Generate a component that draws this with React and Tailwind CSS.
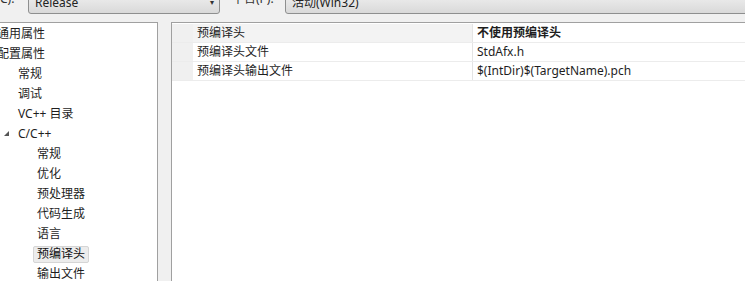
import React from "react";

const treeItems = [
  { label: "通用属性", level: 0 },
  { label: "配置属性", level: 0 },
  { label: "常规", level: 1 },
  { label: "调试", level: 1 },
  { label: "VC++ 目录", level: 1 },
  { label: "C/C++", level: 1, expanded: true },
  { label: "常规", level: 2 },
  { label: "优化", level: 2 },
  { label: "预处理器", level: 2 },
  { label: "代码生成", level: 2 },
  { label: "语言", level: 2 },
  { label: "预编译头", level: 2, selected: true },
  { label: "输出文件", level: 2 },
];

const props = [
  { name: "预编译头", value: "不使用预编译头", bold: true, selected: true },
  { name: "预编译头文件", value: "StdAfx.h" },
  { name: "预编译头输出文件", value: "$(IntDir)$(TargetName).pch" },
];

function Combo({ text, className }) {
  return (
    <div
      className={`h-[23px] -mt-[9px] flex items-center border border-[#8e8f8f] rounded-[3px] bg-gradient-to-b from-[#f2f2f2] to-[#d9d9d9] ${className}`}
    >
      <span className="pl-[6px] flex-1 text-[12px] text-[#222]">{text}</span>
    </div>
  );
}

function TreeRow({ item }) {
  const pad = item.level === 0 ? "pl-0" : item.level === 1 ? "pl-[18px]" : "pl-[33px]";
  return (
    <div className={`h-[20px] flex items-center relative ${pad}`}>
      {item.expanded && (
        <span className="absolute left-[4px] top-[7px] w-0 h-0 border-l-[5px] border-l-transparent border-b-[5px] border-b-[#555]" />
      )}
      {item.selected ? (
        <span className="h-[17px] flex items-center px-[3px] rounded-[2px] border border-[#d5d5d5] bg-[#ececec] text-[#111]">
          {item.label}
        </span>
      ) : (
        <span className={item.level === 0 ? "-ml-[3px]" : item.level === 2 ? "pl-[4px]" : ""}>{item.label}</span>
      )}
    </div>
  );
}

export default function App() {
  return (
    <div
      className="w-[745px] h-[281px] overflow-hidden bg-[#f0f0f0] text-[12px] text-[#1e1e1e]"
      style={{ fontFamily: '"Noto Sans", "Noto Sans CJK SC", sans-serif' }}
    >
      {/* top bar */}
      <div className="h-[22px] flex items-start">
        <span className="-mt-[8px] w-[28px] leading-[14px] text-[#333]">C):</span>
        <div className="relative">
          <Combo text="Release" className="w-[192px]" />
          <span className="absolute right-[6px] -top-[4px] text-[8px] text-[#333]">▾</span>
        </div>
        <span className="-mt-[8px] ml-[12px] w-[53px] leading-[14px] text-[#333]">平台(P):</span>
        <Combo text="活动(Win32)" className="flex-1 -mr-[4px]" />
      </div>

      <div className="flex h-[259px]">
        {/* tree */}
        <div className="w-[158px] pt-[1px] bg-white border-t border-r border-[#a0a0a0] overflow-hidden">
          {treeItems.map((item, i) => (
            <TreeRow key={i} item={item} />
          ))}
        </div>

        <div className="w-[13px]" />

        {/* property grid */}
        <div className="flex-1 pt-[1px] bg-white border-t border-l border-[#a0a0a0]">
          {props.map((p, i) => (
            <div key={i} className="flex h-[19px] border-b border-[#ececec]">
              <div className="w-[21px] bg-[#f0f0f0]" />
              <div
                className={`w-[280px] flex items-center pl-[4px] border-r border-[#e4e4e4] ${
                  p.selected ? "bg-[#f3f3f3]" : ""
                }`}
              >
                {p.name}
              </div>
              <div className={`flex-1 flex items-center pl-[4px] ${p.bold ? "font-bold" : ""}`}>{p.value}</div>
            </div>
          ))}
        </div>
      </div>
    </div>
  );
}
